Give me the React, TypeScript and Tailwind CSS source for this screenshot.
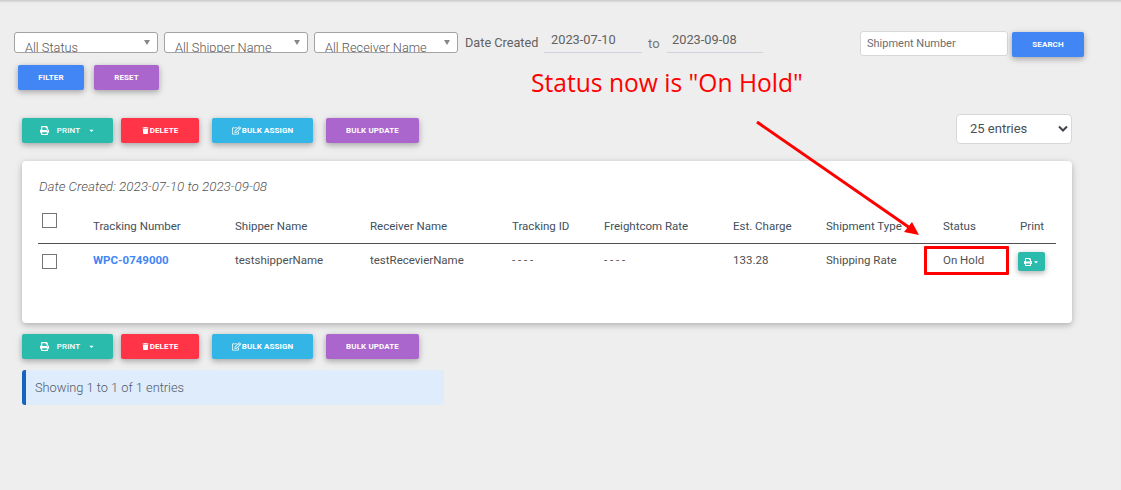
import React from "react";
import { FaPrint, FaTrash, FaRegEdit, FaCaretDown } from "react-icons/fa";

const font = "font-['Roboto','Liberation_Sans',sans-serif]";
const btn = "flex items-center justify-center h-[25px] rounded-[2px] text-white text-[8px] font-bold uppercase tracking-[0.1px] shadow-[0_2px_5px_rgba(0,0,0,0.2),0_2px_8px_rgba(0,0,0,0.14)]";

function FakeSelect({ label }: { label: string }) {
  return (
    <div className="relative w-[144px] h-[21px] bg-white border border-[#a3a3a3] rounded-[3px] overflow-hidden pl-[10px] text-[12.8px] font-light leading-[16px] pt-[7px] text-[#555555]">
      {label}
      <span className="absolute right-[7px] top-[7px] w-0 h-0 border-l-[3px] border-r-[3px] border-t-[5px] border-l-transparent border-r-transparent border-t-[#888888]" />
    </div>
  );
}

function ActionBar() {
  return (
    <div className="flex">
      <button className={`${btn} w-[91px] bg-[#2bbbad] gap-[5px]`}>
        <FaPrint className="text-[9px]" />
        <span className="ml-[3px] font-medium">Print</span>
        <FaCaretDown className="text-[7px] ml-[3px]" />
      </button>
      <button className={`${btn} w-[78px] ml-[8px] bg-[#ff3547] gap-[1px]`}>
        <FaTrash className="text-[7px]" />
        Delete
      </button>
      <button className={`${btn} w-[101px] ml-[13px] bg-[#33b5e5] gap-[1px]`}>
        <FaRegEdit className="text-[9px]" />
        Bulk Assign
      </button>
      <button className={`${btn} w-[93px] ml-[13px] bg-[#aa66cc]`}>Bulk Update</button>
    </div>
  );
}

const cols = "grid grid-cols-[55px_142px_135px_142px_92px_129px_93px_117px_77px_36px]";

export default function App() {
  const headers = ["Tracking Number", "Shipper Name", "Receiver Name", "Tracking ID", "Freightcom Rate", "Est. Charge", "Shipment Type", "Status", "Print"];
  return (
    <div className={`${font} relative w-[1121px] h-[490px] overflow-hidden bg-[#eeeeee] text-[#4f4f4f] shadow-[inset_0_3px_3px_-2px_rgba(0,0,0,0.2)]`}>
      <div className="pt-[31px] pl-[14px]">
        <div className="flex items-start h-[26px]">
          <div className="flex gap-[6px] mt-[1px]">
            <FakeSelect label="All Status" />
            <FakeSelect label="All Shipper Name" />
            <FakeSelect label="All Receiver Name" />
          </div>
          <span className="ml-[7px] mt-[4px] w-[73px] whitespace-nowrap text-[12.7px] leading-[16px] text-[#616161]">Date Created</span>
          <div className="ml-[6px] w-[98px] h-[22px] border-b border-[#cfd2d8] text-[12.8px] leading-[16px] pl-[7px] pt-[1px] text-[#616161]">2023-07-10</div>
          <span className="ml-[6px] mt-[5px] w-[13px] text-[13px] leading-[16px] text-[#757575]">to</span>
          <div className="ml-[6px] w-[96px] h-[22px] border-b border-[#cfd2d8] text-[12.8px] leading-[16px] pl-[5px] pt-[1px] text-[#616161]">2023-09-08</div>
          <div className="ml-[97px] w-[148px] h-[25px] bg-white border border-[#d8d8d8] rounded-[3px] px-[6px] text-[11px] leading-[23px] text-[#6e6e6e]">Shipment Number</div>
          <button className={`${btn} ml-[4px] mt-[1px] w-[72px] bg-[#4285f4]`}>Search</button>
        </div>
        <div className="flex gap-[10px] pl-[4px] mt-[8px]">
          <button className={`${btn} w-[66px] bg-[#4285f4]`}>Filter</button>
          <button className={`${btn} w-[65px] bg-[#aa66cc]`}>Reset</button>
        </div>
      </div>

      <div className="ml-[22px] w-[1050px]">
        <div className="flex justify-between items-start mt-[24px] h-[47px]">
          <div className="mt-[4px]"><ActionBar /></div>
          <div className="relative w-[116px] h-[30px] bg-white border border-[#d5d7db] rounded-[4px] pl-[13px] text-[13px] leading-[27px] text-[#495057]">
            25 entries
            <svg className="absolute right-[3px] top-[10px]" width="10" height="8" viewBox="0 0 10 8">
              <path d="M1 1.5 L5 5.5 L9 1.5" fill="none" stroke="#3f444a" strokeWidth="2" />
            </svg>
          </div>
        </div>

        <div className="bg-white rounded-[4px] h-[162px] pt-[18px] pl-[16px] pr-[16px] shadow-[0_2px_5px_rgba(0,0,0,0.16),0_2px_10px_rgba(0,0,0,0.12)]">
          <div className="pl-[1px] text-[13.4px] font-light leading-[16px] italic text-[#555555]">Date Created: 2023-07-10 to 2023-09-08</div>
          <div className={`${cols} h-[40px] mt-[9px] border-b border-[#4f4f4f] text-[11.5px] text-[#424f5c]`}>
            <div className="pl-[4px] pt-[9px]">
              <div className="w-[15px] h-[15px] border border-[#757575] bg-white" />
            </div>
            {headers.map((h) => (
              <div key={h} className="pt-[14px] leading-[16px] whitespace-nowrap">{h}</div>
            ))}
          </div>
          <div className={`${cols} text-[11.5px] text-[#4f4f4f] leading-[16px]`}>
            <div className="pl-[4px] pt-[10px]">
              <div className="w-[15px] h-[15px] border border-[#757575] bg-white" />
            </div>
            <div className="pt-[8px] font-bold text-[#4285f4]">WPC-0749000</div>
            <div className="pt-[8px]">testshipperName</div>
            <div className="pt-[8px]">testRecevierName</div>
            <div className="pt-[8px]">- - - -</div>
            <div className="pt-[8px]">- - - -</div>
            <div className="pt-[8px]">133.28</div>
            <div className="pt-[8px]">Shipping Rate</div>
            <div className="pt-[8px]">On Hold</div>
            <div className="pt-[8px] -ml-[2px]">
              <button className="flex items-center justify-center gap-[1px] w-[27px] h-[19px] bg-[#2bbbad] text-white rounded-[2px] shadow-[0_2px_5px_rgba(0,0,0,0.2),0_2px_8px_rgba(0,0,0,0.14)]">
                <FaPrint className="text-[8px]" />
                <FaCaretDown className="text-[6px]" />
              </button>
            </div>
          </div>
        </div>

        <div className="mt-[11px]"><ActionBar /></div>

        <div className="mt-[11px] w-[422px] h-[35px] bg-[#dfecfb] border-l-[4px] border-[#1565c0] rounded-[3px] pl-[9px] text-[12.8px] font-light leading-[35px] text-[#4f5b6a]">
          Showing 1 to 1 of 1 entries
        </div>
      </div>

      {/* annotation drawn over the page */}
      <div className="absolute left-[531px] top-[67px] font-['Open_Sans',sans-serif] text-[24.6px] leading-[32px] text-[#ff0000] whitespace-nowrap">
        Status now is "On Hold"
      </div>
      <svg className="absolute left-0 top-0 pointer-events-none" width="1121" height="490" viewBox="0 0 1121 490">
        <line x1="757" y1="122" x2="910" y2="228" stroke="#ff0000" strokeWidth="3" />
        <polygon points="919,235 904,232 912,222" fill="#ff0000" />
      </svg>
      <div className="absolute left-[924px] top-[246px] w-[85px] h-[29px] border-[3px] border-[#ff0000] rounded-[1px]" />
    </div>
  );
}
